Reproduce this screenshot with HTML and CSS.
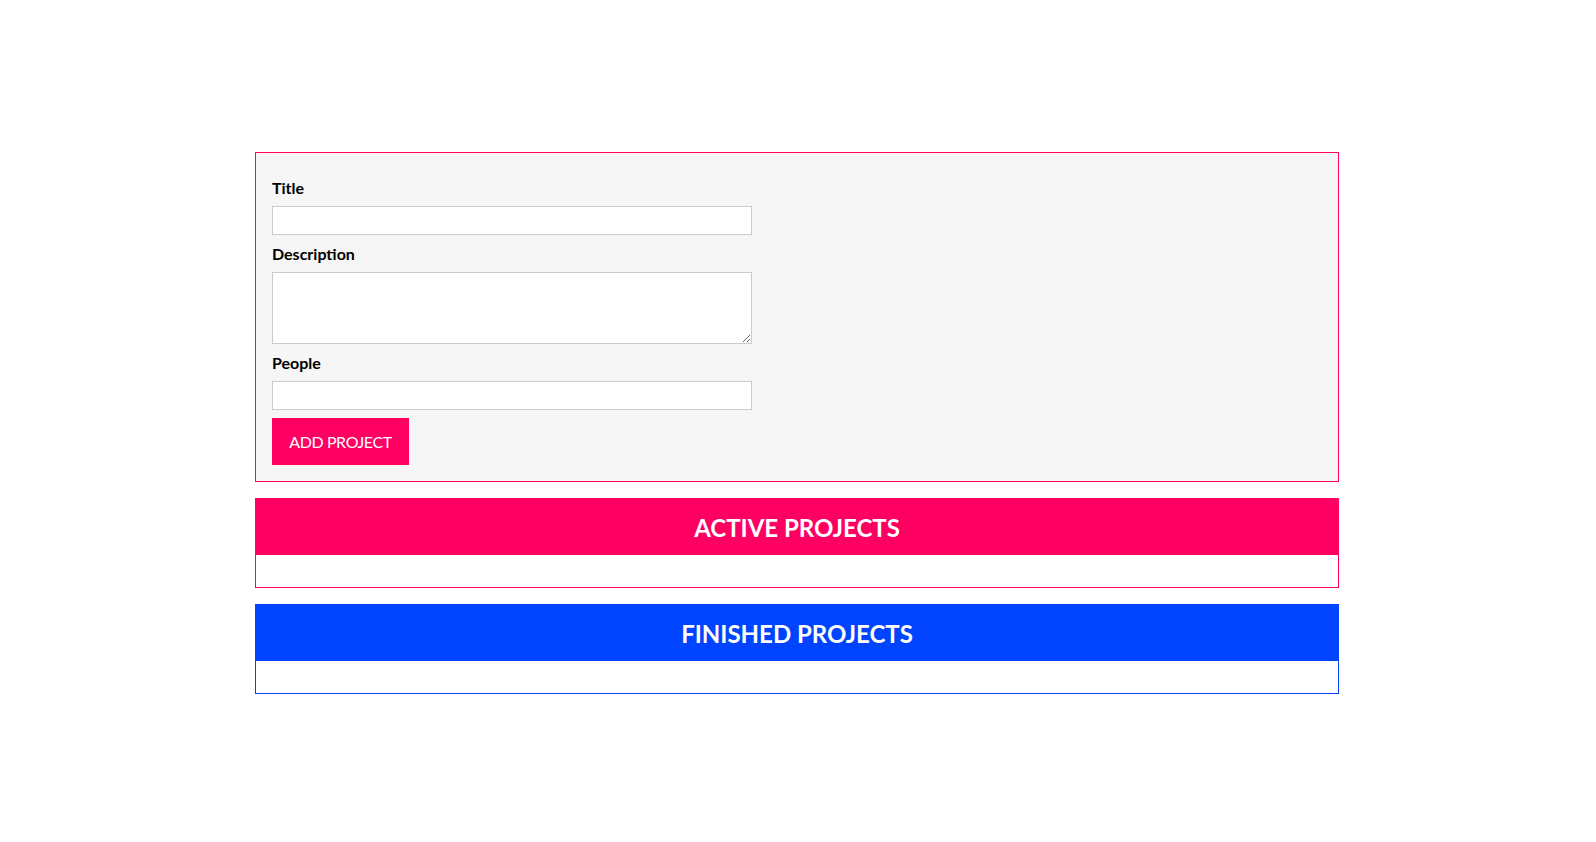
FILE: index.html
```html
<!DOCTYPE html>
<html lang="en">
<head>
<meta charset="utf-8">
<title>Projects</title>
<link rel="stylesheet" href="styles.css">
</head>
<body>
<main class="app">
  <form class="user-input">
    <div class="form-control">
      <label for="title">Title</label>
      <input type="text" id="title">
    </div>
    <div class="form-control">
      <label for="description">Description</label>
      <textarea id="description" rows="3"></textarea>
    </div>
    <div class="form-control">
      <label for="people">People</label>
      <input type="number" id="people">
    </div>
    <button type="button" class="btn">ADD PROJECT</button>
  </form>

  <section class="projects projects--active">
    <header class="projects__header">
      <h2>ACTIVE PROJECTS</h2>
    </header>
    <ul class="projects__list"></ul>
  </section>

  <section class="projects projects--finished">
    <header class="projects__header">
      <h2>FINISHED PROJECTS</h2>
    </header>
    <ul class="projects__list"></ul>
  </section>
</main>
</body>
</html>
```
FILE: styles.css
```css
* {
  box-sizing: border-box;
}

html, body {
  margin: 0;
  background: #ffffff;
  font-family: Lato, "Open Sans", "Liberation Sans", sans-serif;
  color: #000;
}

body {
  padding-right: 2px;
}

.app {
  width: 1084px;
  margin: 0 auto;
  padding-top: 152px;
}

.user-input {
  border: 1px solid #ff0062;
  background: #f6f6f6;
  padding: 16px;
}

.form-control {
  margin: 8px 0;
}

.form-control label {
  display: block;
  font-weight: 700;
  font-size: 16px;
  line-height: 21px;
  margin-bottom: 8px;
}

.form-control input,
.form-control textarea {
  display: block;
  width: 480px;
  height: 29px;
  margin: 0;
  border: 1px solid #cccccc;
  background: #ffffff;
  font: inherit;
  padding: 2px 4px;
}

.form-control textarea {
  height: 72px;
}

.btn {
  display: block;
  margin-top: 8px;
  width: 137px;
  height: 47px;
  padding: 0;
  border: none;
  background: #ff0062;
  color: #ffffff;
  font-family: Lato, "Open Sans", sans-serif;
  font-size: 16px;
  font-weight: 400;
  letter-spacing: -0.4px;
  white-space: nowrap;
  text-align: center;
  cursor: pointer;
}

.projects {
  margin-top: 16px;
  border: 1px solid #ff0062;
  background: #ffffff;
}

.projects--finished {
  border-color: #0044ff;
}

.projects__header {
  height: 56px;
  display: flex;
  align-items: center;
  justify-content: center;
  background: #ff0062;
}

.projects--finished .projects__header {
  background: #0044ff;
}

.projects__header h2 {
  margin: 0;
  color: #ffffff;
  font-size: 24px;
  font-weight: 700;
}

.projects__list {
  height: 32px;
  margin: 0;
  padding: 0;
  list-style: none;
}
```
